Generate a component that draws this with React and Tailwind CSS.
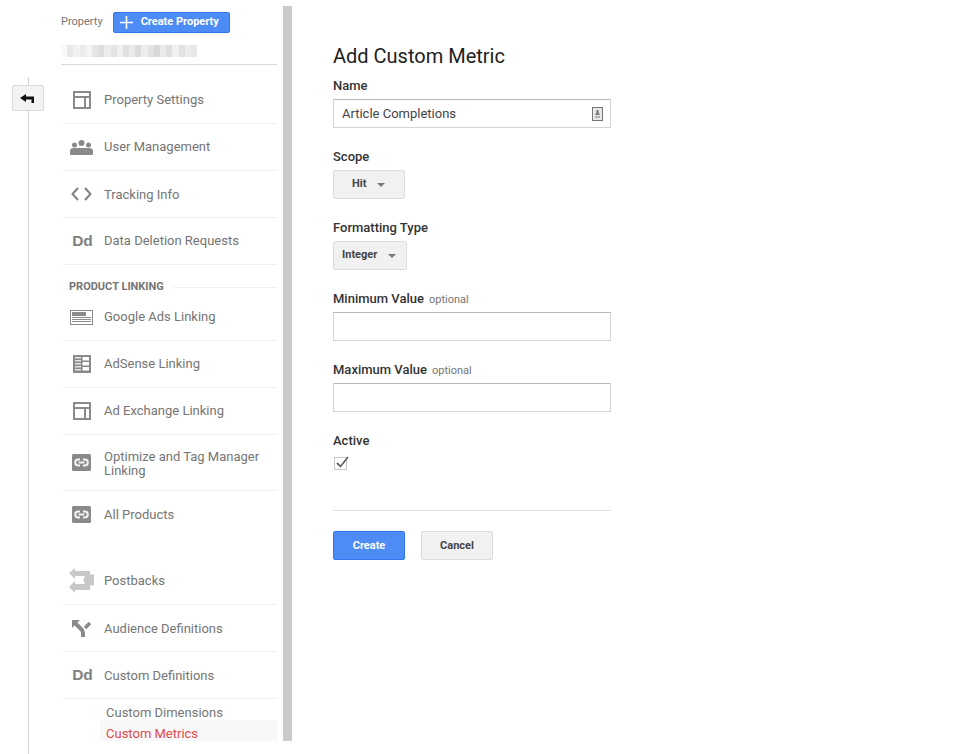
import React from "react";

const Panel = () => (
  <svg width="18" height="18" viewBox="0 0 18 18" className="block">
    <path fill="#8a8a8a" fillRule="evenodd" d="M0 0h18v18H0zM2 2v3h14V2zM2 7v9h9V7zM13 7v9h3V7z" />
  </svg>
);
const People = () => (
  <svg width="23" height="15" viewBox="0 0 23 15" className="block">
    <g fill="#8a8a8a">
      <circle cx="4.500" cy="5" r="2.500" />
      <circle cx="11.500" cy="3" r="3" />
      <circle cx="18.500" cy="5" r="2.500" />
      <path d="M0 14v-3q0-3 4-3h15q4 0 4 3v3q0 1-1 1H1q-1 0-1-1z" />
    </g>
  </svg>
);
const Code = () => (
  <svg width="21" height="14" viewBox="0 0 21 14" className="block">
    <path d="M7 1 1.500 7 7 13M14 1l5.500 6L14 13" fill="none" stroke="#808080" strokeWidth="2" />
  </svg>
);
const Dd = () => (
  <span className="block ml-[2px] font-['Liberation_Sans',sans-serif] text-[15.500px] font-bold leading-none text-[#808080]">Dd</span>
);
const AdsIcon = () => (
  <svg width="23" height="15" viewBox="0 0 23 15" className="block">
    <path fill="#8a8a8a" fillRule="evenodd" d="M0 0h23v15H0zM1 1v13h21V1z" />
    <path fill="#8a8a8a" d="M2 2h14v4H2zM2 7h19v1H2zM2 9h19v1H2zM2 11h19v1H2z" />
  </svg>
);
const AdSense = () => (
  <svg width="18" height="18" viewBox="0 0 18 18" className="block">
    <path fill="#8a8a8a" d="M0 0h18v18H0z" />
    <path fill="#e4e4e4" d="M2 2h6v1.500H2zM2 5h6v1.500H2zM2 8h6v1.500H2zM2 11h6v1.500H2zM2 14h6v1.500H2z" />
    <path fill="#fff" d="M9.500 2H16v3.500H9.500zM9.500 7H16v3.500H9.500zM9.500 12H16v3.500H9.500z" />
  </svg>
);
const LinkIcon = () => (
  <svg width="19" height="17" viewBox="0 0 19 17" className="block">
    <rect width="19" height="17" rx="1.500" fill="#8a8a8a" />
    <g fill="none" stroke="#f4f4f4" strokeWidth="2">
      <path d="M8 5.500H6.200a3 3 0 0 0 0 6H8M11 5.500h1.800a3 3 0 0 1 0 6H11" />
      <path d="M6.500 8.500h6" />
    </g>
  </svg>
);
const Postbacks = () => (
  <svg width="25" height="25" viewBox="0 0 25 25" className="block">
    <g fill="#c8c8c8">
      <path d="M0 5 6 0v3h15v5H6v3z" />
      <path d="M0 19l6-6v3h15v6H6v3z" />
      <path d="M25 6.500v11h-5a5.500 5.500 0 0 1 0-11z" />
    </g>
  </svg>
);
const Fork = () => (
  <svg width="19" height="17" viewBox="0 0 19 17" className="block">
    <path fill="#8a8a8a" d="M0 0h8L0 8z" />
    <path fill="none" stroke="#8a8a8a" strokeWidth="4" d="M3 3l6 6q2 2 2 4v4" />
    <path fill="none" stroke="#8a8a8a" strokeWidth="3.500" d="M13 8l5-5" />
  </svg>
);
const Arrow = () => (
  <svg width="14" height="9" viewBox="0 0 14 9" className="block mr-[3px]">
    <path d="M0 4 6 0v2.500h8V9h-2.500V5.500H6V8z" fill="#111" />
  </svg>
);
const Contact = () => (
  <svg width="11" height="14" viewBox="0 0 11 14" className="block">
    <rect x="0.500" y="0.500" width="10" height="13" fill="#e8e8e8" stroke="#777" />
    <path d="M4.500 3h2v2.500L8 8H3l1.500-2.500z" fill="#777" />
    <path d="M3 9h5v2H3z" fill="#b0b0b0" />
  </svg>
);
const Caret = () => <span className="block w-0 h-0 border-x-[4px] border-x-transparent border-t-[4px] border-t-[#777]" />;

function Row({ icon, children, border = true, text = "leading-[16px]", height = "h-[47px]" }) {
  return (
    <div className={`flex items-center ml-[2px] ${height} ${border ? "border-b border-[#efefef]" : ""}`}>
      <div className="w-[41px] shrink-0 flex justify-center pr-[4px]">{icon}</div>
      <div className={`text-[13px] text-[#757575] ${text}`}>{children}</div>
    </div>
  );
}

const Label = ({ children, optional }) => (
  <div className="h-[16px] text-[13px] font-medium leading-[16px] text-[#333]">
    {children}
    {optional && <span className="ml-[5px] text-[11px] font-normal text-[#757575]">optional</span>}
  </div>
);

const Field = ({ children }) => (
  <div className="mt-[5px] h-[29px] w-[278px] border border-[#d4d4d4] border-t-[#b9b9b9] bg-white flex items-center justify-between pl-[8px] pr-[7px] text-[13px] text-[#444]">
    {children}
  </div>
);

const Select = ({ label, w, pl }) => (
  <div className={`mt-[5px] h-[29px] ${w} ${pl} border border-[#dcdcdc] rounded-[2px] bg-[#f1f1f1] flex items-center gap-[11px] text-[11px] font-bold text-[#444]`}>
    {label}
    <Caret />
  </div>
);

const blur = [250, 232, 242, 236, 244, 230, 222, 236, 228, 240, 224, 234, 220, 238, 226, 216, 234, 222, 240, 226, 236, 232];

export default function App() {
  return (
    <div className="flex w-[958px] h-[754px] overflow-hidden bg-white font-['Roboto',sans-serif]">
      <div className="w-[56px] shrink-0 flex flex-col items-center pt-[77px]">
        <div className="w-px h-[8px] bg-[#d0d0d0]" />
        <div className="w-[32px] h-[26px] shrink-0 border border-[#dcdcdc] rounded-[2px] bg-[#f3f3f3] flex items-center justify-center">
          <Arrow />
        </div>
        <div className="w-px flex-1 bg-[#d0d0d0]" />
      </div>

      <div className="ml-[5px] w-[216px] shrink-0 h-[741px] overflow-hidden">
        <div className="flex items-center h-[44px]">
          <span className="text-[11px] text-[#757575]">Property</span>
          <div className="ml-[10px] w-[117px] h-[21px] rounded-[2px] border border-[#3079ed] bg-[#4d8cf5] flex items-center text-[11px] font-bold text-white">
            <svg width="13" height="13" viewBox="0 0 13 13" className="ml-[6px] mr-[8px]">
              <path d="M6.500 0v13M0 6.500h13" stroke="#fff" strokeWidth="1.600" />
            </svg>
            Create Property
          </div>
        </div>
        <div className="flex h-[12px] mt-[1px] w-[136px]">
          {blur.map((v, i) => (
            <div key={i} className="flex-1" style={{ backgroundColor: `rgb(${v},${v},${v})` }} />
          ))}
        </div>
        <div className="mt-[7px] border-b border-[#d9d9d9]" />

        <div className="mt-[12px]">
          <Row icon={<Panel />}>Property Settings</Row>
          <Row icon={<People />}>User Management</Row>
          <Row icon={<Code />} text="leading-[16px] pt-[2px]">Tracking Info</Row>
          <Row icon={<Dd />}>Data Deletion Requests</Row>
        </div>

        <div className="flex items-center h-[29px] pt-[15px] pl-[8px] gap-[10px]">
          <span className="text-[11px] font-bold text-[#757575] whitespace-nowrap">PRODUCT LINKING</span>
          <div className="flex-1 border-b border-[#efefef]" />
        </div>

        <Row icon={<AdsIcon />}>Google Ads Linking</Row>
        <Row icon={<AdSense />}>AdSense Linking</Row>
        <Row icon={<Panel />}>Ad Exchange Linking</Row>
        <Row icon={<LinkIcon />} text="leading-[14px] pt-[3px]" height="h-[56px]">
          Optimize and Tag Manager
          <br />
          Linking
        </Row>
        <Row icon={<LinkIcon />} border={false}>All Products</Row>

        <div className="mt-[19px]">
          <Row icon={<Postbacks />} height="h-[48px]">Postbacks</Row>
          <Row icon={<Fork />} text="leading-[16px] pt-[2px]">Audience Definitions</Row>
          <Row icon={<Dd />} text="leading-[16px] pt-[2px]">Custom Definitions</Row>
        </div>
        <div className="ml-[39px] mt-[5px]">
          <div className="pl-[6px] h-[16px] leading-[18px] text-[13px] text-[#757575]">Custom Dimensions</div>
          <div className="pl-[6px] h-[21px] leading-[27px] text-[13px] text-[#e04a4a] bg-[#f8f8f8]">Custom Metrics</div>
        </div>
      </div>

      <div className="ml-[6px] mt-[6px] w-[9px] h-[735px] shrink-0 bg-[#cacaca]" />

      <div className="ml-[41px] w-[278px] shrink-0 pt-[44px]">
        <h1 className="text-[20px] leading-[24px] text-[#212121]">Add Custom Metric</h1>

        <div className="mt-[10px]"><Label>Name</Label></div>
        <Field>
          Article Completions
          <Contact />
        </Field>

        <div className="mt-[21px]"><Label>Scope</Label></div>
        <Select label="Hit" w="w-[72px]" pl="pl-[18px]" />

        <div className="mt-[21px]"><Label>Formatting Type</Label></div>
        <Select label="Integer" w="w-[74px]" pl="pl-[8px]" />

        <div className="mt-[21px]"><Label optional>Minimum Value</Label></div>
        <Field />

        <div className="mt-[21px]"><Label optional>Maximum Value</Label></div>
        <Field />

        <div className="mt-[21px]"><Label>Active</Label></div>
        <div className="mt-[8px] ml-px w-[13px] h-[13px] border border-[#c8c8c8] relative">
          <svg width="16" height="14" viewBox="0 0 16 14" className="absolute left-[-1px] top-[-3px]">
            <path d="M3 8l3.500 3.500L14 2" fill="none" stroke="#666" strokeWidth="1.800" />
          </svg>
        </div>

        <div className="mt-[40px] border-b border-[#e0e0e0]" />

        <div className="mt-[20px] flex gap-[16px]">
          <div className="w-[72px] h-[29px] pt-[2px] rounded-[2px] border border-[#3079ed] bg-[#4d8cf5] flex items-center justify-center text-[11px] font-bold text-white">Create</div>
          <div className="w-[72px] h-[29px] pt-[2px] rounded-[2px] border border-[#dcdcdc] bg-[#f1f1f1] flex items-center justify-center text-[11px] font-bold text-[#444]">Cancel</div>
        </div>
      </div>
    </div>
  );
}
